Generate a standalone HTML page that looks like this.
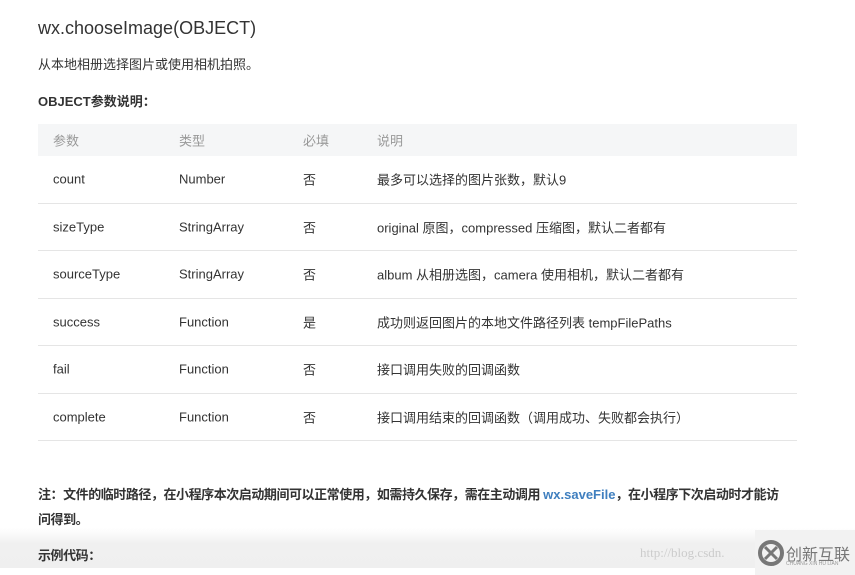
<!DOCTYPE html>
<html><head><meta charset="utf-8"><style>
*{margin:0;padding:0;box-sizing:border-box}
body{width:855px;height:575px;background:#fff;font-family:"Liberation Sans","Noto Sans CJK SC",sans-serif;color:#333;position:relative;overflow:hidden}
.a{position:absolute;white-space:nowrap}
h1{position:absolute;left:38px;top:18px;font-size:18px;font-weight:normal;color:#333}
.tb{position:absolute;left:38px;top:124px;width:759px}
.hd{height:32px;background:#f5f6f7;position:relative;color:#999;font-size:13px}
.r{height:47.5px;border-bottom:1px solid #e5e5e5;position:relative;font-size:13px;color:#333}
.c{position:absolute;top:50%;transform:translateY(-50%)}
.c1{left:15px}.c2{left:141px}.c3{left:265px}.c4{left:339px}
.band{position:absolute;left:0;top:528px;width:855px;height:40px;background:linear-gradient(#fff,#f0f0f0 40%,#efefef)}
</style></head><body>
<h1>wx.chooseImage(OBJECT)</h1>
<div class="a" style="left:38px;top:54px;font-size:13px">从本地相册选择图片或使用相机拍照。</div>
<div class="a" style="left:38px;top:91px;font-size:13px;font-weight:bold">OBJECT参数说明：</div>
<div class="tb">
<div class="hd"><span class="c c1">参数</span><span class="c c2">类型</span><span class="c c3">必填</span><span class="c c4">说明</span></div>
<div class="r"><span class="c c1">count</span><span class="c c2">Number</span><span class="c c3">否</span><span class="c c4">最多可以选择的图片张数，默认9</span></div>
<div class="r"><span class="c c1">sizeType</span><span class="c c2">StringArray</span><span class="c c3">否</span><span class="c c4">original 原图，compressed 压缩图，默认二者都有</span></div>
<div class="r"><span class="c c1">sourceType</span><span class="c c2">StringArray</span><span class="c c3">否</span><span class="c c4">album 从相册选图，camera 使用相机，默认二者都有</span></div>
<div class="r"><span class="c c1">success</span><span class="c c2">Function</span><span class="c c3">是</span><span class="c c4">成功则返回图片的本地文件路径列表 tempFilePaths</span></div>
<div class="r"><span class="c c1">fail</span><span class="c c2">Function</span><span class="c c3">否</span><span class="c c4">接口调用失败的回调函数</span></div>
<div class="r"><span class="c c1">complete</span><span class="c c2">Function</span><span class="c c3">否</span><span class="c c4">接口调用结束的回调函数（调用成功、失败都会执行）</span></div>
</div>
<div class="a" style="left:38px;top:484px;font-size:13px;font-weight:bold;letter-spacing:-0.45px">注：文件的临时路径，在小程序本次启动期间可以正常使用，如需持久保存，需在主动调用 <span style="color:#3f7fbf;letter-spacing:0">wx.saveFile</span>，在小程序下次启动时才能访</div>
<div class="a" style="left:38px;top:509px;font-size:13px;font-weight:bold;letter-spacing:-0.45px">问得到。</div>
<div class="band"></div>
<div class="a" style="left:38px;top:545px;font-size:13px;font-weight:bold;letter-spacing:-0.45px">示例代码：</div>
<div class="a" style="left:640px;top:545px;font-size:13px;color:#ccc;font-family:'Liberation Serif',serif">http://blog.csdn.</div>
<div class="a" style="left:755px;top:530px;width:100px;height:45px;background:#f2f2f2"></div>
<svg class="a" style="left:758px;top:540px" width="26" height="26" viewBox="0 0 26 26"><circle cx="13" cy="13" r="11" fill="none" stroke="#777" stroke-width="4"/><path d="M7 7 L19 19 M19 7 L7 19" stroke="#777" stroke-width="3"/></svg>
<div class="a" style="left:786px;top:541px;font-size:16px;color:#777">创新互联</div>
<div class="a" style="left:786px;top:561px;font-size:5px;color:#999">CHUANG XIN HU LIAN</div>
</body></html>
